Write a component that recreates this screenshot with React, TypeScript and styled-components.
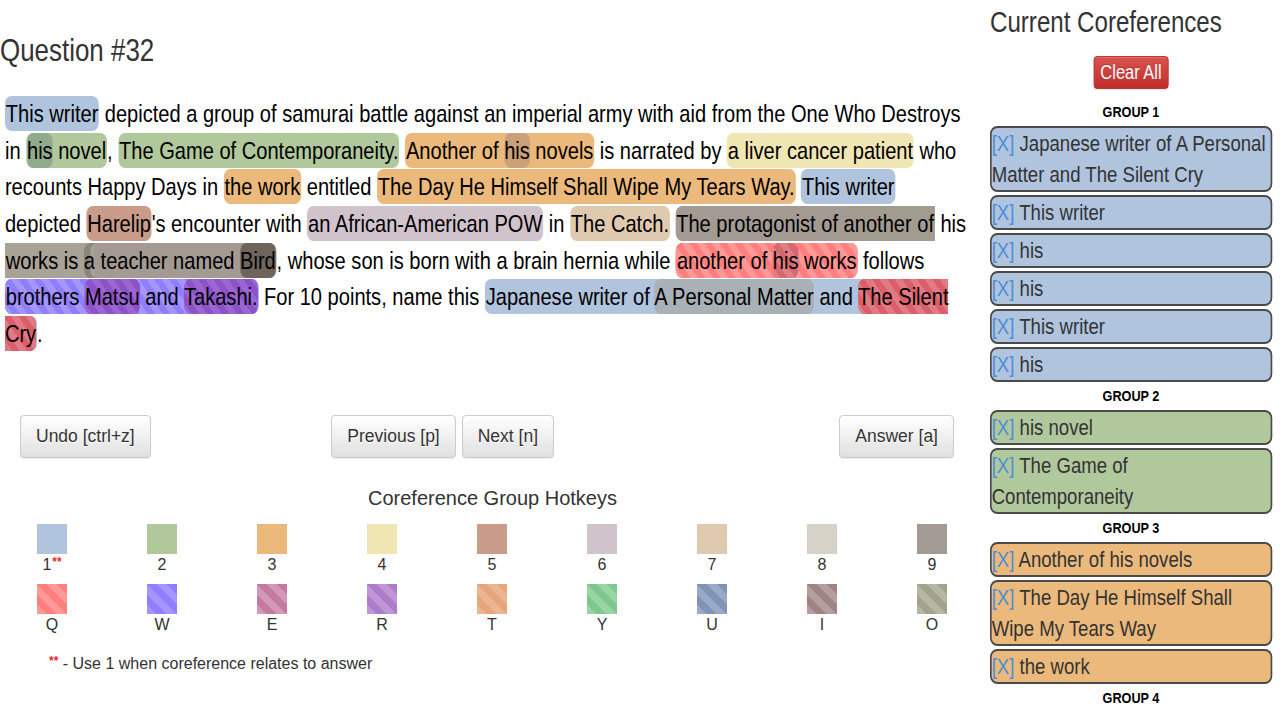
import React from "react";
import styled, { createGlobalStyle, css } from "styled-components";

const Global = createGlobalStyle`
  html, body { margin: 0; padding: 0; background: #fff; overflow: hidden; }
  body { font-family: "Liberation Sans", Arial, sans-serif; color: #333; }
`;

/* The reference uses a narrow Helvetica-like face; we condense Liberation Sans horizontally. */
const SQUEEZE = 0.823;

type Fill = { base: string; light?: string };

const G: Record<string, Fill> = {
  g1: { base: "#b0c4de" },
  g2: { base: "#b1c89d" },
  g3: { base: "#ebb97c" },
  g4: { base: "#efe6b4" },
  g5: { base: "#c99b89" },
  g6: { base: "#d0c3cb" },
  g7: { base: "#dfcaaf" },
  g8: { base: "#d6d2c8" },
  g9: { base: "#a39a93" },
  q: { base: "#ff7f7f", light: "#ff9999" },
  w: { base: "#8f7fff", light: "#a596ff" },
  e: { base: "#c47a9f", light: "#d497b8" },
  r: { base: "#ad7dcb", light: "#bf96d6" },
  t: { base: "#e7a57d", light: "#ebb793" },
  y: { base: "#7fc78f", light: "#99d4a5" },
  u: { base: "#7f94b6", light: "#9aaac6" },
  i: { base: "#a08484", light: "#b39f9f" },
  o: { base: "#a3a38d", light: "#b6b6a5" },
  his2: { base: "#8fab8b" },
  his3: { base: "#c9a078" },
  a9: { base: "#a29c90" },
  w5: { base: "#a8a297" },
  bird: { base: "#6e645c" },
  hisQ: { base: "#d9676f", light: "#e07f86" },
  mr: { base: "#8c52c8", light: "#9c66d2" },
  gray: { base: "#a9b1b6" },
  silent: { base: "#da5f6b", light: "#e27a84" },
};

const fillCss = (f: Fill, angle = 50) =>
  f.light
    ? css`
        background-color: ${f.base};
        background-image: repeating-linear-gradient(
          ${angle}deg,
          ${f.light} 0 7px,
          ${f.base} 7px 14px
        );
      `
    : css`
        background-color: ${f.base};
      `;

const Page = styled.div`
  display: flex;
  align-items: flex-start;
  width: 1280px;
`;

const Main = styled.div`
  width: 985px;
  flex: none;
`;

const Title = styled.h2`
  margin: 34px 0 0;
  font-weight: normal;
  font-size: 31.5px;
  line-height: 33px;
  color: #333;
  transform: scaleX(${SQUEEZE});
  transform-origin: left top;
`;

const Passage = styled.p`
  margin: 29px 0 0;
  padding-left: 6px;
  font-size: 24.4px;
  line-height: 36.67px;
  color: #000;
  white-space: nowrap;
  transform: scaleX(${SQUEEZE});
  transform-origin: left top;
`;

const Mention = styled.span<{ $f: Fill; $sqL?: boolean; $sqR?: boolean; $inner?: boolean }>`
  ${(p) => fillCss(p.$f)};
  padding: 4px ${(p) => (p.$inner ? "0" : "1px")};
  border-radius: ${(p) => (p.$sqL ? "0" : "8px")} ${(p) => (p.$sqR ? "0" : "8px")}
    ${(p) => (p.$sqR ? "0" : "8px")} ${(p) => (p.$sqL ? "0" : "8px")};
`;

const Sliver = styled.span`
  padding: 4px 0;
  border-radius: 8px 0 0 8px;
  box-shadow: inset 8px 0 0 #8d857b;
`;

const ButtonRow = styled.div`
  display: grid;
  grid-template-columns: 1fr 1fr 1fr;
  margin: 62px 31px 0 20px;
`;

const Cell = styled.div<{ $end?: boolean }>`
  display: flex;
  gap: 6px;
  justify-content: ${(p) => (p.$end ? "flex-end" : "flex-start")};
`;

const Btn = styled.button`
  height: 43px;
  padding: 0 15px;
  font-family: "Liberation Sans", Arial, sans-serif;
  font-size: 17.5px;
  color: #333;
  background-color: #fff;
  background-image: linear-gradient(to bottom, #fff 0, #e0e0e0 100%);
  border: 1px solid #ccc;
  border-radius: 4px;
  box-shadow: inset 0 1px 0 rgba(255, 255, 255, 0.15), 0 1px 1px rgba(0, 0, 0, 0.075);
  text-shadow: 0 1px 0 #fff;
`;

const HotTitle = styled.div`
  margin-top: 28px;
  text-align: center;
  font-size: 20px;
  line-height: 24px;
  color: #333;
`;

const HotGrid = styled.div`
  display: grid;
  grid-template-columns: repeat(9, 110px);
  row-gap: 10px;
  margin: 14px 0 0 -3px;
`;

const HotKey = styled.div`
  display: flex;
  flex-direction: column;
  align-items: center;
`;

const Swatch = styled.div<{ $f: Fill }>`
  width: 30px;
  height: 30px;
  ${(p) => fillCss(p.$f, 45)};
`;

const KeyLabel = styled.div`
  margin-top: 2px;
  font-size: 16px;
  line-height: 18px;
  color: #333;
`;

const Stars = styled.span`
  position: relative;
  top: -4px;
  margin-left: 1px;
  color: #f0262b;
  font-size: 12px;
  line-height: 0;
  font-weight: bold;
`;

const Footnote = styled.div`
  margin: 20px 0 0 48px;
  font-size: 16px;
  line-height: 20px;
  color: #333;
`;

const Side = styled.div`
  width: ${282 / SQUEEZE}px;
  margin-left: 5px;
  flex: none;
  display: flex;
  flex-direction: column;
  gap: 3px;
  transform: scaleX(${SQUEEZE});
  transform-origin: left top;
`;

const SideTitle = styled.h3`
  margin: 5px 0 0;
  font-weight: normal;
  font-size: 29.3px;
  line-height: 33px;
  color: #333;
`;

const ClearBtn = styled.button`
  align-self: center;
  margin: 15px 0 9px;
  height: 33px;
  padding: 0 7px;
  font-family: "Liberation Sans", Arial, sans-serif;
  font-size: 20px;
  color: #fff;
  background-color: #d9534f;
  background-image: linear-gradient(to bottom, #d9534f 0, #c12e2a 100%);
  border: 1px solid #b92c28;
  border-radius: 4px;
  text-shadow: 0 -1px 0 rgba(0, 0, 0, 0.2);
  box-shadow: inset 0 1px 0 rgba(255, 255, 255, 0.15), 0 1px 1px rgba(0, 0, 0, 0.075);
`;

const GroupLabel = styled.div`
  text-align: center;
  font-weight: bold;
  font-size: 15.4px;
  line-height: 22px;
  color: #000;
`;

const Item = styled.div<{ $f: Fill }>`
  ${(p) => fillCss(p.$f)};
  border: 2px solid #4a4a4a;
  border-left-width: 2.4px;
  border-right-width: 2.4px;
  border-radius: 9px / 8px;
  font-size: 22.6px;
  line-height: 31px;
  color: #333;
`;

const Remove = styled.span`
  color: #4a8fd8;
`;

const rows1 = ["1", "2", "3", "4", "5", "6", "7", "8", "9"];
const rows2 = ["Q", "W", "E", "R", "T", "Y", "U", "I", "O"];
const fills1 = ["g1", "g2", "g3", "g4", "g5", "g6", "g7", "g8", "g9"];
const fills2 = ["q", "w", "e", "r", "t", "y", "u", "i", "o"];

const groups: { label: string; fill: string; items: string[] }[] = [
  {
    label: "GROUP 1",
    fill: "g1",
    items: [
      "Japanese writer of A Personal Matter and The Silent Cry",
      "This writer",
      "his",
      "his",
      "This writer",
      "his",
    ],
  },
  { label: "GROUP 2", fill: "g2", items: ["his novel", "The Game of Contemporaneity"] },
  {
    label: "GROUP 3",
    fill: "g3",
    items: ["Another of his novels", "The Day He Himself Shall Wipe My Tears Way", "the work"],
  },
  { label: "GROUP 4", fill: "g4", items: [] },
];

export default function App() {
  return (
    <>
      <Global />
      <Page>
        <Main>
          <Title>Question #32</Title>
          <Passage>
            <Mention $f={G.g1}>This writer</Mention> depicted a group of samurai battle against an
            imperial army with aid from the One Who Destroys
            <br />
            in <Mention $f={G.g2}><Mention $inner $f={G.his2}>his</Mention> novel</Mention>,{" "}
            <Mention $f={G.g2}>The Game of Contemporaneity.</Mention>{" "}
            <Mention $f={G.g3}>
              Another of <Mention $inner $f={G.his3}>his</Mention> novels
            </Mention>{" "}
            is narrated by <Mention $f={G.g4}>a liver cancer patient</Mention> who
            <br />
            recounts Happy Days in <Mention $f={G.g3}>the work</Mention> entitled{" "}
            <Mention $f={G.g3}>The Day He Himself Shall Wipe My Tears Way.</Mention>{" "}
            <Mention $f={G.g1}>This writer</Mention>
            <br />
            depicted <Mention $f={G.g5}>Harelip</Mention>'s encounter with{" "}
            <Mention $f={G.g6}>an African-American POW</Mention> in{" "}
            <Mention $f={G.g7}>The Catch.</Mention>{" "}
            <Mention $f={G.g9} $sqR>
              The protagonist of <Mention $inner $sqR $f={G.a9}>another of</Mention>
            </Mention>{" "}
            his
            <br />
            <Mention $f={G.w5} $sqL>
              works is <Sliver>a</Sliver>
              <Mention $inner $sqL $f={G.g9}>
                {" "}teacher named <Mention $inner $f={G.bird}>Bird</Mention>
              </Mention>
            </Mention>
            , whose son is born with a brain hernia while{" "}
            <Mention $f={G.q}>
              another of <Mention $inner $f={G.hisQ}>his</Mention> works
            </Mention>{" "}
            follows
            <br />
            <Mention $f={G.w}>
              brothers <Mention $inner $f={G.mr}>Matsu</Mention> and{" "}
              <Mention $inner $f={G.mr}>Takashi.</Mention>
            </Mention>{" "}
            For 10 points, name this{" "}
            <Mention $f={G.g1}>
              Japanese writer of <Mention $inner $f={G.gray}>A Personal Matter</Mention> and{" "}
              <Mention $inner $f={G.silent}>
                The Silent
                <br />
                Cry
              </Mention>
            </Mention>
            .
          </Passage>

          <ButtonRow>
            <Cell>
              <Btn>Undo [ctrl+z]</Btn>
            </Cell>
            <Cell>
              <Btn>Previous [p]</Btn>
              <Btn>Next [n]</Btn>
            </Cell>
            <Cell $end>
              <Btn>Answer [a]</Btn>
            </Cell>
          </ButtonRow>

          <HotTitle>Coreference Group Hotkeys</HotTitle>
          <HotGrid>
            {rows1.map((k, i) => (
              <HotKey key={k}>
                <Swatch $f={G[fills1[i]]} />
                <KeyLabel>
                  {k}
                  {k === "1" && <Stars>**</Stars>}
                </KeyLabel>
              </HotKey>
            ))}
            {rows2.map((k, i) => (
              <HotKey key={k}>
                <Swatch $f={G[fills2[i]]} />
                <KeyLabel>{k}</KeyLabel>
              </HotKey>
            ))}
          </HotGrid>
          <Footnote>
            <Stars>**</Stars> - Use 1 when coreference relates to answer
          </Footnote>
        </Main>

        <Side>
          <SideTitle>Current Coreferences</SideTitle>
          <ClearBtn>Clear All</ClearBtn>
          {groups.map((g) => (
            <React.Fragment key={g.label}>
              <GroupLabel>{g.label}</GroupLabel>
              {g.items.map((it, i) => (
                <Item key={i} $f={G[g.fill]}>
                  <Remove>[X]</Remove> {it}
                </Item>
              ))}
            </React.Fragment>
          ))}
        </Side>
      </Page>
    </>
  );
}
